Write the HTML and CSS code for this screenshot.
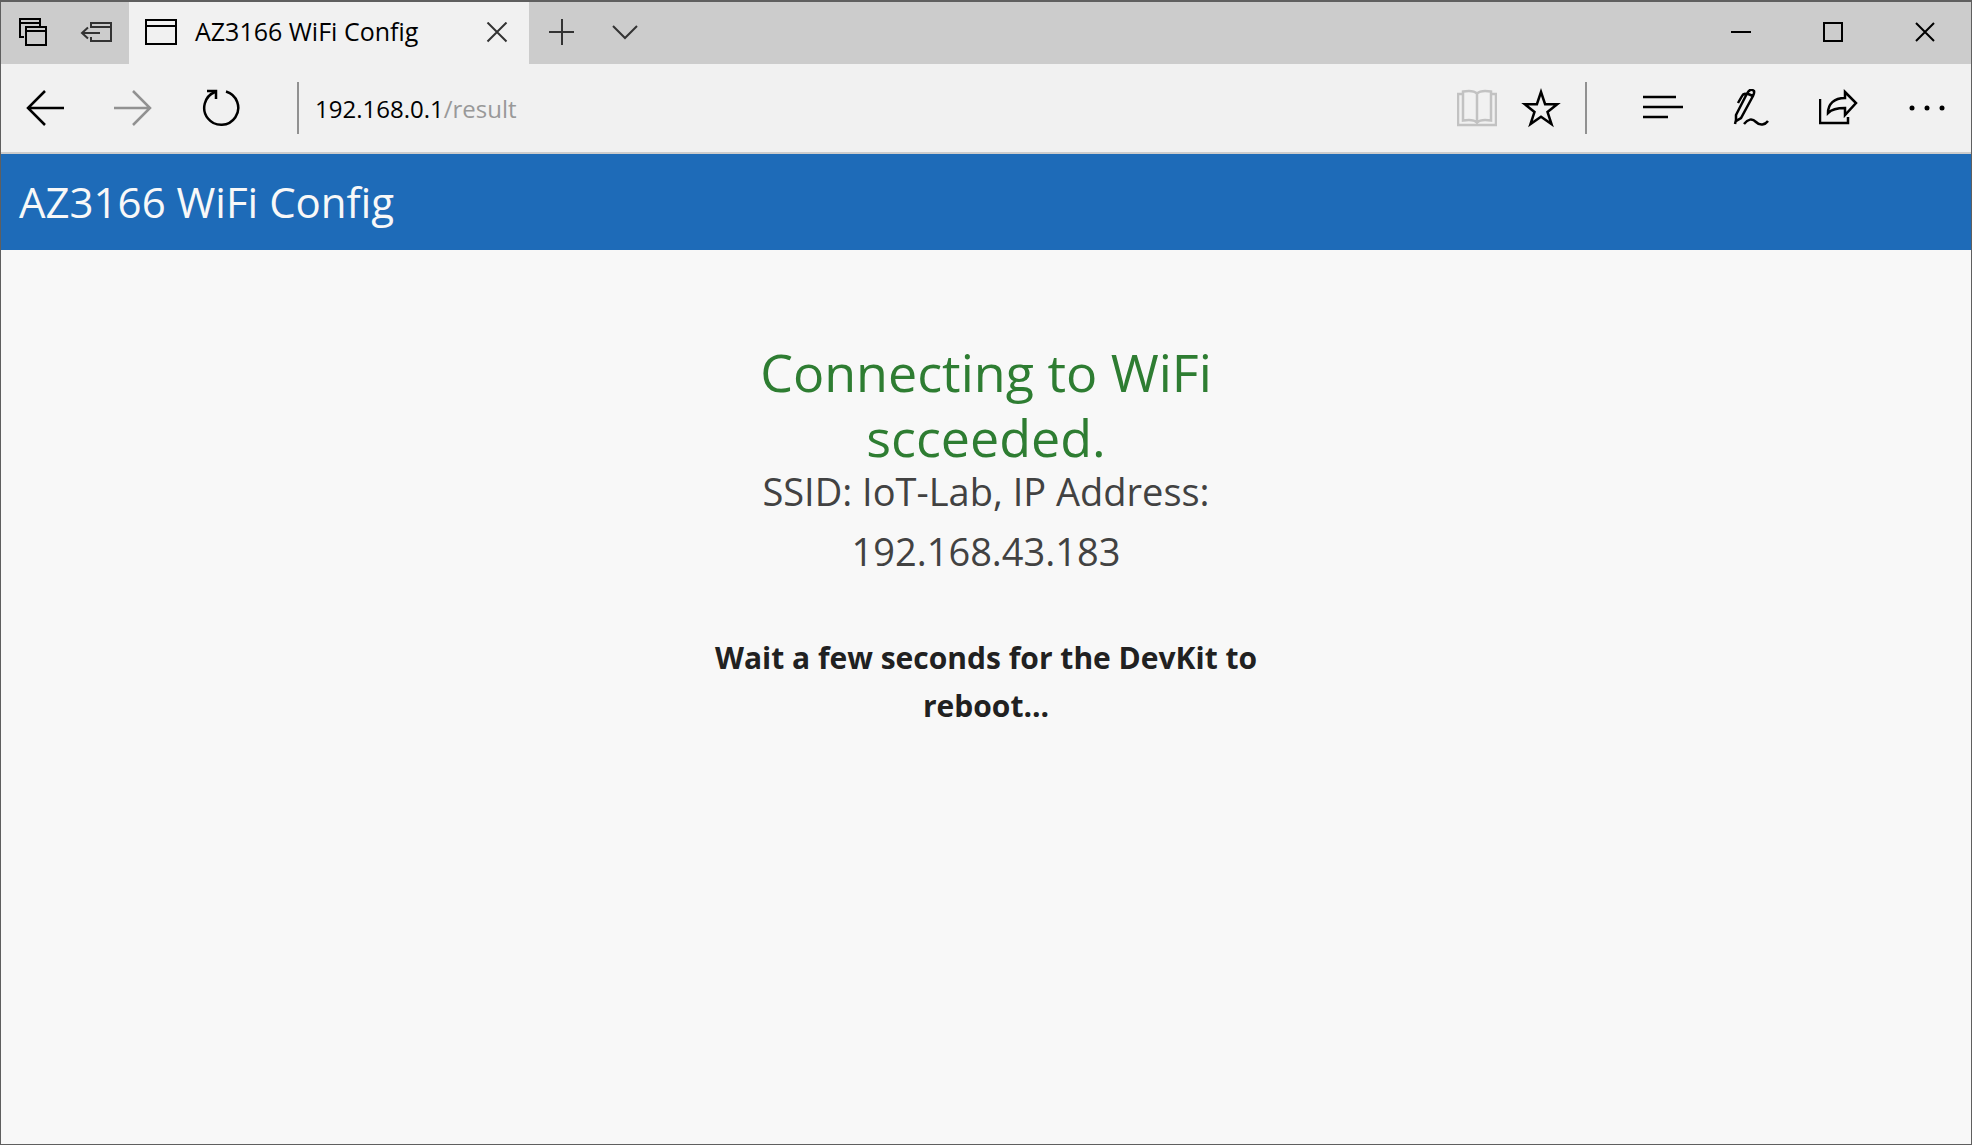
FILE: index.html
```html
<!DOCTYPE html>
<html lang="en">
<head>
<meta charset="utf-8">
<meta name="viewport" content="width=device-width, initial-scale=1">
<title>AZ3166 WiFi Config</title>
<link rel="stylesheet" href="styles.css">
</head>
<body>
<div class="window">
  <div class="tabbar">
    <div class="tab-tools">
      <button class="tool" aria-label="Tabs you've set aside"><svg width="30" height="30" viewBox="0 0 30 30"><path d="M6 19H2V1h20v7M2 5h20M8 9h20v18H8zM8 13h20"/></svg></button>
      <button class="tool" aria-label="Set tabs aside"><svg class="soft" width="34" height="30" viewBox="0 0 34 30"><path d="M11 10V5h20v18H11v-4M11 9h20M20 15H2M8 9.500L2 15l6 5.500"/></svg></button>
    </div>
    <div class="tab">
      <svg width="32" height="30" viewBox="0 0 32 30"><path d="M1 2h30v24H1zM1 8h30"/></svg>
      <span class="tab-title">AZ3166 WiFi Config</span>
      <button class="tab-close" aria-label="Close tab"><svg class="soft" width="22" height="22" viewBox="0 0 22 22"><path d="M1.500 .5l19 19M20.500 .5l-19 19"/></svg></button>
    </div>
    <div class="tab-actions">
      <button class="tab-action" aria-label="New tab"><svg class="soft" width="26" height="28" viewBox="0 0 26 28"><path d="M14 0v26M1 13h25"/></svg></button>
      <button class="tab-action" aria-label="Show tab previews"><svg class="soft" width="26" height="26" viewBox="0 0 26 26"><path d="M1 6l12 12L25 6"/></svg></button>
    </div>
    <div class="caption">
      <button aria-label="Minimize"><svg width="22" height="22" viewBox="0 0 22 22"><path d="M1 10h20"/></svg></button>
      <button aria-label="Maximize"><svg width="22" height="22" viewBox="0 0 22 22"><path d="M2 1h18v18H2z"/></svg></button>
      <button aria-label="Close"><svg width="22" height="22" viewBox="0 0 22 22"><path d="M2 1l18 18M20 1L2 19"/></svg></button>
    </div>
  </div>

  <div class="toolbar">
    <button class="nav" aria-label="Back"><svg width="38" height="38" viewBox="0 0 38 38"><path d="M38 19H2M19 2L2 19l17 17"/></svg></button>
    <button class="nav" aria-label="Forward" disabled><svg width="38" height="38" viewBox="0 0 38 38"><path d="M0 19h36M19 2l17 17-17 17"/></svg></button>
    <button class="nav" aria-label="Refresh"><svg width="38" height="38" viewBox="0 0 38 38"><path d="M24 2.500A17 17 0 1 1 13 3"/><path d="M5 2h9v8"/></svg></button>
    <div class="address" role="textbox" contenteditable="true" spellcheck="false" aria-label="Address">192.168.0.1<span class="path">/result</span></div>
    <button class="page-tool" aria-label="Reading view" disabled><svg width="40" height="38" viewBox="0 0 40 38"><path d="M6 5H1v31h38V5h-5M6 2.500c6-1 11-1 14 2 3-3 8-3 14-2v29c-6-1-11-1-14 2-3-3-8-3-14-2zM20 4.500v29"/></svg></button>
    <button class="page-tool" aria-label="Add to favorites"><svg width="40" height="40" viewBox="0 0 40 40"><path d="M20 4l4.100 12.200H36.200l-9.700 7.700 4 12.100L20 28.700 9.500 36l4-12.100-9.700-7.700h12.100z"/></svg></button>
    <span class="divider"></span>
    <button class="nav" aria-label="Hub"><svg width="40" height="38" viewBox="0 0 40 38"><path d="M0 8h33M0 18h40M0 28h25"/></svg></button>
    <button class="nav" aria-label="Make a web note"><svg width="38" height="38" viewBox="0 0 38 38"><path d="M15 4.500L4 26v6l5-3L21 7M15 4.500L21 7M15 4.500C17 1 19-.5 22 2c.5 1.500 0 3-1 5M14 5c-2-.5-3 0-4 2L6 14M4 31l-1 4M12 35c4-5 8-6 12-2s9 3 12-1"/></svg></button>
    <button class="nav" aria-label="Share"><svg width="40" height="38" viewBox="0 0 40 38"><path d="M1 10v24h28v-6M26 3l11 11-11 12v-7c-8 0-13 1-17 5 0-9 6-15 17-15z"/></svg></button>
    <button class="nav" aria-label="More"><svg class="dots" width="38" height="38" viewBox="0 0 38 38"><circle cx="4" cy="19" r="2.500"/><circle cx="19" cy="19" r="2.500"/><circle cx="34" cy="19" r="2.500"/></svg></button>
  </div>

  <header class="site-header">AZ3166 WiFi Config</header>
  <main class="result">
    <h1>Connecting to WiFi scceeded.</h1>
    <p class="details">SSID: IoT-Lab, IP Address: 192.168.43.183</p>
    <p class="notice">Wait a few seconds for the DevKit to reboot...</p>
  </main>
</div>
</body>
</html>
```
FILE: styles.css
```css
* { box-sizing: border-box; }

body {
  margin: 0;
  font-family: "Segoe UI", "Open Sans", sans-serif;
  color: #000;
}

.window {
  display: flex;
  flex-direction: column;
  min-height: 100vh;
  border: 1px solid #5f5f5f;
  border-top-width: 2px;
  background: #f8f8f8;
}

button {
  display: flex;
  align-items: center;
  justify-content: center;
  padding: 0;
  border: 0;
  background: none;
  color: inherit;
}

svg {
  display: block;
  flex: none;
  fill: none;
  stroke: currentColor;
  stroke-width: 2;
}

.soft { color: #333; }

.tabbar {
  display: flex;
  height: 62px;
  background: #ccc;
}

.tab-tools { display: flex; }
.tool { width: 64px; }

.tab {
  display: flex;
  align-items: center;
  width: 400px;
  padding: 0 16px;
  background: #f1f1f1;
}

.tab-title {
  flex: 1;
  margin-left: 18px;
  padding-bottom: 4px;
  font-size: 25px;
  line-height: 36px;
  white-space: nowrap;
}

.tab-close { width: 32px; height: 32px; }

.tab-actions { display: flex; }
.tab-action { width: 64px; }

.caption {
  display: flex;
  margin-left: auto;
}
.caption button { width: 92px; }

.toolbar {
  display: flex;
  align-items: center;
  height: 90px;
  border-bottom: 2px solid #ccc;
  background: #f1f1f1;
}

.nav { width: 88px; height: 88px; }
.nav svg, .page-tool svg { stroke-width: 2.500px; }
.nav:disabled { color: #919191; }

.address {
  flex: 1;
  height: 52px;
  margin-left: 32px;
  padding-left: 16px;
  border-left: 2px solid #919191;
  outline: 0;
  font-size: 24px;
  line-height: 54px;
  white-space: nowrap;
}
.path { color: #999; }

.page-tool { width: 64px; height: 88px; }
.page-tool:disabled { color: #c2c2c2; }

.divider {
  width: 2px;
  height: 52px;
  margin: 0 32px 0 12px;
  background: #919191;
}

.nav .dots {
  fill: currentColor;
  stroke: none;
}

.site-header {
  padding: 16px 18px;
  background: #1e6bb8;
  color: #f8f8f8;
  font-size: 42px;
  line-height: 64px;
}

.result {
  width: 100%;
  max-width: 564px;
  margin: 0 auto;
  padding-top: 89px;
  text-align: center;
}

h1 {
  margin: 0;
  color: #2e7d32;
  font-size: 52px;
  font-weight: 400;
  line-height: 65px;
}

.details {
  margin: -8px 0 53px;
  color: #424242;
  font-size: 38px;
  line-height: 60px;
}

.notice {
  margin: 0;
  color: #212121;
  font-size: 30px;
  font-weight: 700;
  line-height: 48px;
}
```
